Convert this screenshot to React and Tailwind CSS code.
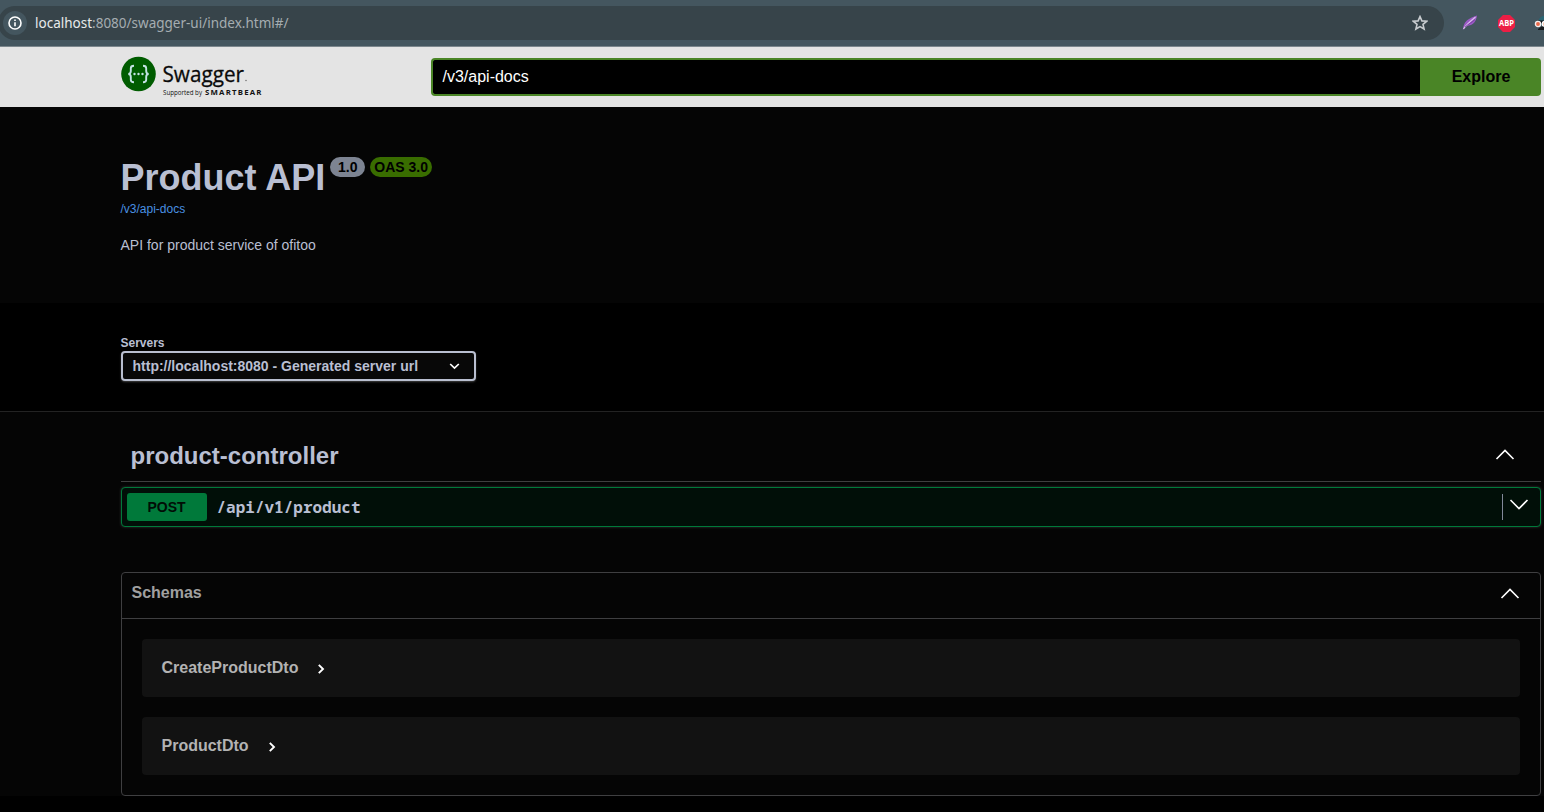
import React from "react";

function Chevron({ className = "", d = "M.5 10 9 1.500 17.500 10", w = 18, h = 11, sw = 1.6 }) {
  return (
    <svg width={w} height={h} viewBox={`0 0 ${w} ${h}`} className={"shrink-0 overflow-visible " + className} fill="none" stroke="#fff" strokeWidth={sw}>
      <path d={d} />
    </svg>
  );
}

function BrowserBar() {
  return (
    <div className="flex h-[47px] items-start overflow-hidden border-b border-[#7b868c] bg-[#44565f] pt-[6px]">
      <div className="-ml-[2px] flex h-[34px] w-[1446px] shrink-0 items-center rounded-full bg-[#37444a] pl-[5px]">
        <div className="flex size-6 items-center justify-center rounded-full bg-[#44565f]">
          <svg width="14" height="14" viewBox="0 0 14 14" fill="none" stroke="#fff" strokeWidth="1.6">
            <circle cx="7" cy="7" r="6" />
            <path d="M7 6.2v4M7 3.6v1.5" />
          </svg>
        </div>
        <div className="ml-[8px] font-['Noto_Sans',sans-serif] text-[13.5px] leading-5 text-[#a5adb1]">
          <span className="text-[#e8ebec]">localhost</span>:8080/swagger-ui/index.html#/
        </div>
        <svg width="16" height="16" viewBox="0 0 16 16" className="mr-[16px] ml-auto" fill="none" stroke="#c8cccf" strokeWidth="1.6">
          <path d="M8 1.600 9.900 5.900l4.700.4-3.600 3.100 1.100 4.600L8 11.600 3.900 14l1.100-4.600-3.600-3.100 4.700-.4z" />
        </svg>
      </div>
      <div className="flex h-[34px] shrink-0 items-center pl-[18px]">
        <svg width="16" height="18" viewBox="0 0 16 18">
          <path d="M.8 16C1.500 10.500 3 8 5.500 6 8 4 11 3 15 1.500c-.3 3.500-1.800 6.500-4 8.300C8.500 11.800 5 11.500 3 13.500z" fill="#9b59c6" />
          <path d="M1.500 15C4 11 8 7.500 13.500 3" stroke="#dcc0ee" strokeWidth="1.200" fill="none" />
          <path d="M3 13C6 10 10 8.500 13 5.500" stroke="#6a3490" strokeWidth=".7" fill="none" />
        </svg>
        <svg width="17" height="17" viewBox="0 0 17 17" className="ml-[19.500px]">
          <path d="M5 0h7l5 5v7l-5 5H5l-5-5V5z" fill="#ed1e45" />
          <text x="8.500" y="11" textAnchor="middle" fontFamily="Open Sans" fontWeight="700" fontSize="8" textLength="15" lengthAdjust="spacingAndGlyphs" fill="#fff">ABP</text>
        </svg>
        <svg width="18" height="16" viewBox="0 0 18 16" className="ml-[19px]">
          <path d="M4 7Q5 2 9 1h9v9H4z" fill="#2b6674" />
          <path d="M4 5.500h14v3H4z" fill="#101518" />
          <circle cx="4" cy="9" r="2.600" fill="#e8694a" stroke="#f4eeee" strokeWidth="1.300" />
          <circle cx="11" cy="9" r="2.800" fill="#f3c5b3" stroke="#fff" strokeWidth="1.300" />
          <path d="M4 14 7.500 11.500 14 12v3H4z" fill="#17191b" />
        </svg>
      </div>
    </div>
  );
}

function Logo() {
  return (
    <svg width="146" height="44" viewBox="0 0 146 44" className="mt-[2px] shrink-0">
      <circle cx="17.500" cy="18" r="17.300" fill="#005c00" />
      <g fill="none" stroke="#c5e3e5" strokeWidth="1.900">
        <path d="M13 9.800c-2.600 0-3.200.8-3.200 2.500v2.700c0 1.900-.8 2.800-2.400 3 1.600.2 2.400 1.100 2.400 3v2.700c0 1.700.6 2.500 3.200 2.500" />
        <path d="M22 9.800c2.600 0 3.200.8 3.200 2.500v2.700c0 1.900.8 2.800 2.400 3-1.600.2-2.400 1.100-2.400 3v2.700c0 1.700-.6 2.500-3.200 2.500" />
      </g>
      <g fill="#c5e3e5">
        <circle cx="13.500" cy="18" r="1.200" />
        <circle cx="17.500" cy="18" r="1.200" />
        <circle cx="21.500" cy="18" r="1.200" />
      </g>
      <text x="41.500" y="25.500" fontFamily="Open Sans" fontSize="21.500" textLength="81.500" lengthAdjust="spacingAndGlyphs" fill="#0a0a0a" stroke="#0a0a0a" strokeWidth=".3">Swagger</text>
      <circle cx="125" cy="24.500" r=".8" fill="#777" />
      <text x="42" y="39" fontFamily="Open Sans" fontSize="6.200" textLength="39" fill="#111">Supported by</text>
      <text x="84" y="38.700" fontFamily="Open Sans" fontWeight="700" fontSize="7.800" textLength="56.500" fill="#111">SMARTBEAR</text>
    </svg>
  );
}

function Topbar() {
  return (
    <div className="flex h-[60px] items-center bg-[#e4e4e4] pr-[3px] pl-[120.500px]">
      <Logo />
      <div className="ml-auto flex h-[38px] w-[1110px]">
        <div className="flex flex-1 items-center rounded-l-[4px] border-2 border-r-0 border-[#4a8526] bg-black pl-[9.500px] text-[16px] text-white">/v3/api-docs</div>
        <div className="flex w-[121px] items-center justify-center rounded-r-[4px] bg-[#4a8526] pl-[1px] text-[16px] font-bold text-black">Explore</div>
      </div>
    </div>
  );
}

function Model({ name }) {
  return (
    <div className="flex h-[58px] items-center rounded-[4px] bg-[#121212] pl-[19.500px]">
      <span className="pb-[1px] pl-[0.5px] text-[16px] font-bold text-[#b3b3b3]">{name}</span>
      <Chevron className="mt-[2px] ml-[19px]" w={8} h={10} d="M1.800 .8 6 5 1.800 9.200" sw={1.900} />
    </div>
  );
}

export default function App() {
  return (
    <div className="h-[812px] w-full overflow-hidden bg-black font-['Liberation_Sans',Arial,sans-serif] text-[#b9bfd2]">
      <BrowserBar />
      <Topbar />

      <div className="h-[196px] bg-[#050505] pt-[50px] pl-[120.500px]">
        <div className="flex items-start">
          <h1 className="text-[36px] leading-[41px] font-bold">Product API</h1>
          <span className="ml-[5px] flex h-5 w-[35px] items-center justify-center rounded-full bg-[#7d8492] text-[14px] font-bold text-black">1.0</span>
          <span className="ml-[5px] flex h-5 w-[62px] items-center justify-center rounded-full bg-[#396d00] text-[14px] font-bold text-black">OAS 3.0</span>
        </div>
        <div className="mt-[4px] text-[12px] leading-[14px] text-[#4990e2]">/v3/api-docs</div>
        <p className="mt-[13px] text-[14px] leading-8 text-[#b9bfd2]">API for product service of ofitoo</p>
      </div>

      <div className="h-[108px] pt-[33px] pl-[120.500px]">
        <div className="text-[12px] leading-[14px] font-bold">Servers</div>
        <div className="mt-[1px] flex h-[30px] w-[355px] items-center rounded-[4px] border-2 border-[#b9bfd0] bg-[#080808] pr-[14px] pl-[10px] text-[14px] font-bold shadow-[0_1px_2px_rgba(255,255,255,0.25)]">
          http://localhost:8080 - Generated server url
          <Chevron className="ml-auto" w={11} h={8} d="M1.200 2 5.500 6 9.800 2" sw={1.700} />
        </div>
      </div>

      <div className="h-[385px] border-t border-[#232323] bg-[#050505] pr-[3px] pl-[120.500px]">
        <div className="flex h-[70px] items-center border-b border-[#3f3f3f] pt-[17px] pr-[27px] pl-[10px]">
          <h3 className="pt-[2px] text-[24px] leading-7 font-bold">product-controller</h3>
          <Chevron className="mb-[2px] ml-auto" />
        </div>
        <div className="mt-[5px] flex h-[40px] items-center rounded-[4px] border border-[#00793a] bg-[#010f08] pr-[12px] pl-[5px] shadow-[0_0_3px_rgba(255,255,255,0.19)]">
          <div className="flex h-7 w-20 items-center justify-center rounded-[3px] bg-[#00793a] text-[14px] font-bold text-[#000d06]">POST</div>
          <span className="ml-[10px] font-['Noto_Sans_Mono','DejaVu_Sans_Mono',monospace] text-[16px] font-bold">/api/v1/product</span>
          <span className="ml-auto h-[26px] w-px bg-[#82899a]" />
          <Chevron className="mb-[5px] ml-[7px]" d="M.5 1 9 9.500 17.500 1" />
        </div>
        <section className="mt-[45px] h-[224px] rounded-[4px] border border-[#3f3f41]">
          <div className="flex h-[46px] items-center border-b border-[#3f3f41] pr-[21px] pl-[10px]">
            <span className="pb-[5px] text-[16px] font-bold text-[#a0a0a0]">Schemas</span>
            <Chevron className="mb-[4px] ml-auto" />
          </div>
          <div className="flex flex-col gap-5 px-5 pt-5">
            <Model name="CreateProductDto" />
            <Model name="ProductDto" />
          </div>
        </section>
      </div>
    </div>
  );
}
